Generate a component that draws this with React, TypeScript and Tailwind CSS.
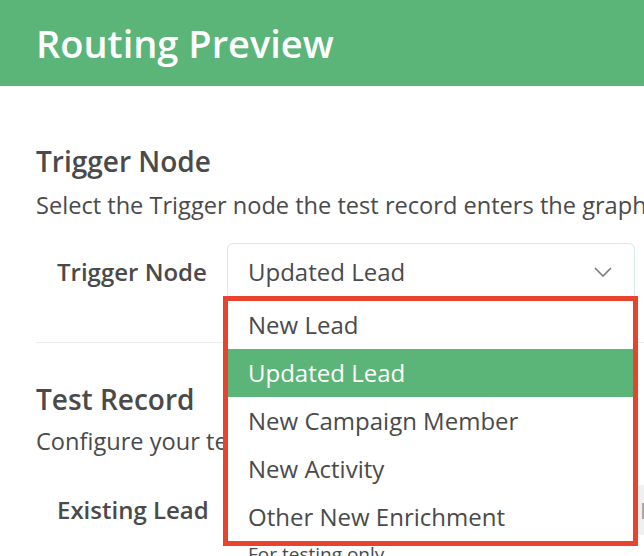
const options = ["New Lead", "Updated Lead", "New Campaign Member", "New Activity", "Other New Enrichment"];

export default function App() {
  const selected = "Updated Lead";

  return (
    <div className="w-[644px] h-[556px] overflow-hidden bg-white text-[#4a4a4a] font-['Open_Sans',sans-serif]">
      {/* header */}
      <div className="h-[86px] bg-[#5bb478] px-[36px] flex items-center">
        <h1 className="text-[38px] font-semibold text-white leading-none">Routing Preview</h1>
      </div>

      <div className="pl-[36px] pt-[56px]">
        {/* trigger node */}
        <h2 className="text-[28px] font-semibold leading-[38px] whitespace-nowrap">Trigger Node</h2>
        <p className="mt-[10px] text-[23.6px] leading-[30px] whitespace-nowrap">
          Select the Trigger node the test record enters the graph through.
        </p>

        <div className="mt-[23px] pl-[21px] flex items-center">
          <span className="w-[170px] shrink-0 text-[24px] font-semibold whitespace-nowrap">Trigger Node</span>
          <div className="relative">
            <div className="w-[408px] h-[57px] border border-[#d3ede0] rounded-[6px] flex items-center justify-between pl-[20px] pr-[22px]">
              <span className="text-[24px] whitespace-nowrap">{selected}</span>
              <svg width="18" height="10" viewBox="0 0 18 10" fill="none">
                <polyline points="1,1 9,9 17,1" stroke="#7a7a7a" strokeWidth="1.6" />
              </svg>
            </div>

            {/* open menu */}
            <div className="absolute left-[-4px] top-[53px] z-10 w-[415px] bg-white border-[5px] border-[#e8442d]">
              {options.map((opt) => (
                <div
                  key={opt}
                  className={`h-[48px] pl-[20px] flex items-center text-[24px] whitespace-nowrap ${
                    opt === selected ? "bg-[#5bb478] text-white" : ""
                  }`}
                >
                  {opt}
                </div>
              ))}
            </div>
          </div>
        </div>

        <div className="mt-[42px] h-px bg-[#ececec]" />

        {/* test record */}
        <h2 className="mt-[37px] text-[28px] font-semibold leading-[38px] whitespace-nowrap">Test Record</h2>
        <p className="mt-[8px] text-[23.6px] leading-[30px] whitespace-nowrap">
          Configure your test record to route through the graph.
        </p>

        <div className="mt-[29px] pl-[21px] flex">
          <span className="w-[170px] shrink-0 h-[50px] flex items-center text-[24px] font-semibold whitespace-nowrap">
            Existing Lead
          </span>
          <div className="flex flex-col">
            <div className="flex items-center">
              <div className="w-[410px] h-[50px]" />
              <div className="w-[200px] h-[50px] bg-[#f0f0f0] rounded-l-[4px] flex items-center pl-[3px] text-[22px] text-[#9aa0a0]">
                Find
              </div>
            </div>
            <span className="mt-[6px] pl-[21px] text-[19px] leading-[26px] whitespace-nowrap">For testing only</span>
          </div>
        </div>
      </div>
    </div>
  );
}
